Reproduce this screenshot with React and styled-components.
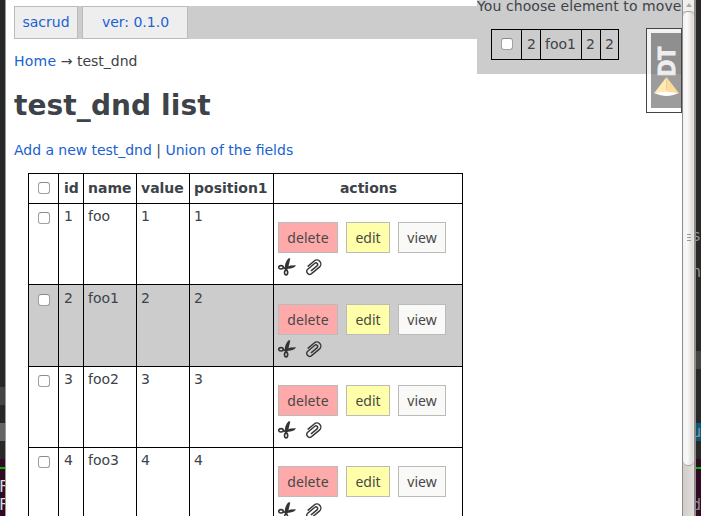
import React from "react";
import styled, { createGlobalStyle } from "styled-components";

const Global = createGlobalStyle`
  * { box-sizing: border-box; }
  body { margin: 0; overflow: hidden; }
`;

const Desktop = styled.div`
  display: flex;
  width: 701px;
  height: 516px;
  overflow: hidden;
  font: 14px/18px "DejaVu Sans", sans-serif;
  color: #3d4349;
`;

const Terminal = styled.div`
  flex: none;
  width: ${(p) => p.$width}px;
  overflow: hidden;
  display: flex;
  flex-direction: column;
  background: #282828;
  font: 15px/18px "DejaVu Sans Mono", monospace;
  color: ${(p) => p.$color};
  ${(p) => p.$edge && "border-right: 1px solid #9c9a98;"}
`;

const TerminalLine = styled.div`
  flex: none;
  height: ${(p) => p.$height}px;
  background: ${(p) => p.$bg || "transparent"};
  text-indent: ${(p) => p.$shift || 0}px;
  white-space: pre;
`;

const Page = styled.main`
  position: relative;
  flex: none;
  width: 676px;
  padding: 6px 0 0 8px;
  overflow: hidden;
  background: #fff;
`;

const Link = styled.a`
  color: #1962d2;
  letter-spacing: ${(p) => p.$spacing || 0}px;
`;

const Toolbar = styled.nav`
  display: flex;
  gap: 4px;
  width: 463px;
  height: 33px;
  background: #ccc;
`;

const ToolbarItem = styled.a`
  width: ${(p) => p.$width}px;
  height: 33px;
  padding-left: ${(p) => p.$inset || 0}px;
  border: 1px solid #bbb;
  background: #eee;
  color: #1962d2;
  line-height: 31px;
  text-align: center;
`;

const Breadcrumbs = styled.div`
  margin-top: 13px;
`;

const Title = styled.h1`
  margin: 18px 0 0;
  font-size: 28px;
  line-height: 36px;
  letter-spacing: 0.1px;
`;

const PageLinks = styled.div`
  margin: 17px 0 14px;
`;

const Table = styled.div`
  width: 435px;
  margin-left: 14px;
  border: solid #000;
  border-width: 1px 0 0 1px;
`;

const Row = styled.div`
  display: grid;
  grid-template-columns: 30px 25px 53px 53px 84px 189px;
  height: ${(p) => p.$height}px;
  background: ${(p) => (p.$selected ? "#ccc" : "#fff")};
`;

const Cell = styled.div`
  padding: ${(p) => (p.$low ? 4 : 3)}px 0 0 ${(p) => (p.$id ? 5 : 4)}px;
  border: solid #000;
  border-width: 0 1px 1px 0;
  overflow: hidden;
`;

const HeadCell = styled(Cell)`
  padding-top: 5px;
  padding-left: ${(p) => (p.$center ? 1 : p.$id ? 5 : 4)}px;
  font-weight: bold;
  text-align: ${(p) => (p.$center ? "center" : "left")};
`;

const CheckCell = styled(Cell)`
  padding: ${(p) => (p.$low ? 9 : 8)}px 0 0 9px;
`;

const Checkbox = styled.span`
  display: block;
  width: 12px;
  height: 12px;
  border: 1px solid #a39e99;
  border-top-color: #8e8985;
  border-radius: 3px;
  background: #fff;
`;

const ActionsCell = styled(Cell)`
  padding: ${(p) => (p.$low ? 19 : 18)}px 0 0 4px;
`;

const Buttons = styled.div`
  display: flex;
  gap: 8px;
`;

const Button = styled.button`
  width: ${(p) => p.$width}px;
  height: 31px;
  padding: 0;
  border: 1px solid #bbb;
  background: ${(p) => p.$bg};
  color: #484848;
  font: 14px/29px "Noto Sans", sans-serif;
  letter-spacing: ${(p) => p.$spacing || 0}px;
`;

const Tools = styled.div`
  display: flex;
  gap: 8px;
  margin-top: 5px;
`;

const Icon = styled.svg`
  display: block;
  width: 18px;
  height: 18px;
`;

const MovePanel = styled.aside`
  position: absolute;
  left: 471px;
  top: 0;
  width: 205px;
  height: 74px;
  overflow: hidden;
  background: #ccc;
  white-space: nowrap;
`;

const PanelText = styled.div`
  margin-top: -3px;
  letter-spacing: 0.08px;
`;

const MoveRow = styled.div`
  display: grid;
  grid-template-columns: 30px 19px 41px 19px 18px;
  width: 128px;
  height: 31px;
  margin: 14px 0 0 14px;
  border: solid #000;
  border-width: 1px 0 1px 1px;
`;

const MoveCell = styled.div`
  padding: ${(p) => (p.$check ? "8px 0 0 9px" : "5px 0 0 4px")};
  border-right: 1px solid #000;
  text-indent: ${(p) => (p.$nudge ? 1 : 0)}px;
`;

const DebugTab = styled.div`
  position: absolute;
  left: 640px;
  top: 28px;
  width: 36px;
  height: 85px;
  padding: 4px 0 4px 4px;
  border: 1px solid #444;
  background: rgba(255, 255, 255, 0.75);
`;

const DebugFace = styled.div`
  display: flex;
  flex-direction: column;
  align-items: flex-start;
  height: 75px;
  padding: 13px 0 0 3px;
  background: linear-gradient(#8f8f8f 0 41px, #9c9c9c 41px);
`;

const DebugLabel = styled.span`
  width: 24px;
  height: 31px;
  writing-mode: vertical-rl;
  transform: rotate(180deg);
  color: #eee;
  font: bold 24px/24px "Open Sans", "DejaVu Sans", sans-serif;
  letter-spacing: -1px;
  -webkit-text-stroke: 0.9px #eee;
`;

const Scrollbar = styled.div`
  flex: none;
  width: 14px;
  display: flex;
  flex-direction: column;
  border: solid #8f8c89;
  border-width: 0 2px 0 1px;
  background: linear-gradient(90deg, #d0cdca, #dfdcd9);
`;

const ScrollArrow = styled.div`
  display: flex;
  justify-content: center;
  height: 11px;
  padding-top: 3px;
  background: #f0efed;
`;

const Thumb = styled.div`
  display: flex;
  flex-direction: column;
  align-items: center;
  justify-content: center;
  gap: 2px;
  height: 455px;
  padding-bottom: 3px;
  border: 1px solid #a5a29f;
  border-width: 1px 0;
  border-radius: 5px;
  background: linear-gradient(90deg, #f2f1ef, #fbfafa 35%, #dddcd9 90%, #efeeed);
`;

const Grip = styled.span`
  width: 4px;
  height: 1px;
  background: #9b9894;
`;

const rows = [
  { id: 1, name: "foo", height: 81 },
  { id: 2, name: "foo1", height: 82, selected: true },
  { id: 3, name: "foo2", height: 81 },
  { id: 4, name: "foo3", height: 81 },
];

function Scissors() {
  return (
    <Icon viewBox="0 0 18 18">
      <g fill="none" stroke="#333" strokeWidth="1.6">
        <ellipse cx="3" cy="9.3" rx="2.3" ry="1.7" />
        <ellipse cx="8.1" cy="14.6" rx="1.6" ry="2.3" />
        <path d="M5.2 9.9 8 10.2M7.7 12.4V10" />
      </g>
      <path d="M6.6 10.5C6.7 6.8 7.8 2.8 10.6.3L12.3.5 10.2 9.5 9.4 11.8 7 12Z" fill="#333" />
      <path d="M8.3 8.9 12.5 7.6 18 7.3C17 9.4 15 10.2 12.5 10.5L8.3 11Z" fill="#333" />
    </Icon>
  );
}

function Paperclip() {
  return (
    <Icon viewBox="0 0 18 18">
      <path
        d="M-3.4-4H4.6A4 4 0 0 1 4.6 4H-6A3 3 0 0 1-6-1.9H3.6A1.7 1.7 0 0 1 3.6 1.5H-3.8"
        fill="none"
        stroke="#383838"
        strokeWidth="1.45"
        strokeLinecap="round"
        transform="translate(9.3 9) rotate(-40)"
      />
    </Icon>
  );
}

function DataRow({ item }) {
  const low = item.selected;
  return (
    <Row $height={item.height} $selected={item.selected}>
      <CheckCell $low={low}><Checkbox /></CheckCell>
      <Cell $id $low={low}>{item.id}</Cell>
      <Cell $low={low}>{item.name}</Cell>
      <Cell $low={low}>{item.id}</Cell>
      <Cell $low={low}>{item.id}</Cell>
      <ActionsCell $low={low}>
        <Buttons>
          <Button $width={60} $bg="#faa" $spacing={0.1}>delete</Button>
          <Button $width={44} $bg="#ffa">edit</Button>
          <Button $width={48} $bg="#f9f9f8">view</Button>
        </Buttons>
        <Tools><Scissors /><Paperclip /></Tools>
      </ActionsCell>
    </Row>
  );
}

export default function App() {
  return (
    <>
      <Global />
      <Desktop>
        <Terminal $width={6} $color="#ddd" $edge>
          <TerminalLine $height={387} />
          <TerminalLine $height={18} $bg="#444" />
          <TerminalLine $height={18} />
          <TerminalLine $height={18} $bg="#666" />
          <TerminalLine $height={18} />
          <TerminalLine $height={8} $bg="#300a24" />
          <TerminalLine $height={2} $bg="#00b800" />
          <TerminalLine $height={9} $bg="#300a24" />
          <TerminalLine $height={18} $bg="#300a24" $shift={-1}>F</TerminalLine>
          <TerminalLine $height={20} $bg="#300a24" $shift={-1}>F</TerminalLine>
        </Terminal>
        <Page>
          <Toolbar>
            <ToolbarItem $width={64}>sacrud</ToolbarItem>
            <ToolbarItem $width={106} $inset={1}>ver: 0.1.0</ToolbarItem>
          </Toolbar>
          <Breadcrumbs><Link $spacing={0.25}>Home</Link> → test_dnd</Breadcrumbs>
          <Title>test_dnd list</Title>
          <PageLinks><Link $spacing={-0.04}>Add a new test_dnd</Link> | <Link>Union of the fields</Link></PageLinks>
          <Table>
            <Row $height={30}>
              <CheckCell><Checkbox /></CheckCell>
              <HeadCell $id>id</HeadCell>
              <HeadCell>name</HeadCell>
              <HeadCell>value</HeadCell>
              <HeadCell>position1</HeadCell>
              <HeadCell $center>actions</HeadCell>
            </Row>
            {rows.map((item) => <DataRow key={item.id} item={item} />)}
          </Table>
          <MovePanel>
            <PanelText>You choose element to move</PanelText>
            <MoveRow>
              <MoveCell $check><Checkbox /></MoveCell>
              <MoveCell $nudge>2</MoveCell>
              <MoveCell>foo1</MoveCell>
              <MoveCell>2</MoveCell>
              <MoveCell>2</MoveCell>
            </MoveRow>
          </MovePanel>
          <DebugTab>
            <DebugFace>
              <DebugLabel>DT</DebugLabel>
              <svg width="25" height="20" viewBox="0 0 25 20">
                <path d="M0 16Q12.5 10 25 16Q18 19 12.5 19Q7 19 0 16Z" fill="#fff" />
                <path d="M12.5 0 0 16.3Q6 14.8 12.5 14.8Z" fill="#ffebb0" />
                <path d="M12.5 0 25 16.3Q19 14.8 12.5 14.8Z" fill="#fbdc9a" />
              </svg>
            </DebugFace>
          </DebugTab>
        </Page>
        <Scrollbar>
          <ScrollArrow>
            <svg width="6" height="4" viewBox="0 0 6 4"><path d="M0 4 3 0 6 4Z" fill="#aaa" /></svg>
          </ScrollArrow>
          <Thumb><Grip /><Grip /><Grip /></Thumb>
        </Scrollbar>
        <Terminal $width={5} $color="#929292">
          <TerminalLine $height={227} />
          <TerminalLine $height={36} $shift={-4}>s</TerminalLine>
          <TerminalLine $height={88} $shift={-4}>n</TerminalLine>
          <TerminalLine $height={18} $bg="#444" />
          <TerminalLine $height={54} />
          <TerminalLine $height={18} $bg="#065a7c" $shift={-4}>u</TerminalLine>
          <TerminalLine $height={18} />
          <TerminalLine $height={8} $bg="#300a24" />
          <TerminalLine $height={2} $bg="#00b800" />
          <TerminalLine $height={27} $bg="#300a24" />
          <TerminalLine $height={20} $bg="#300a24" $shift={-4}>d</TerminalLine>
        </Terminal>
      </Desktop>
    </>
  );
}
